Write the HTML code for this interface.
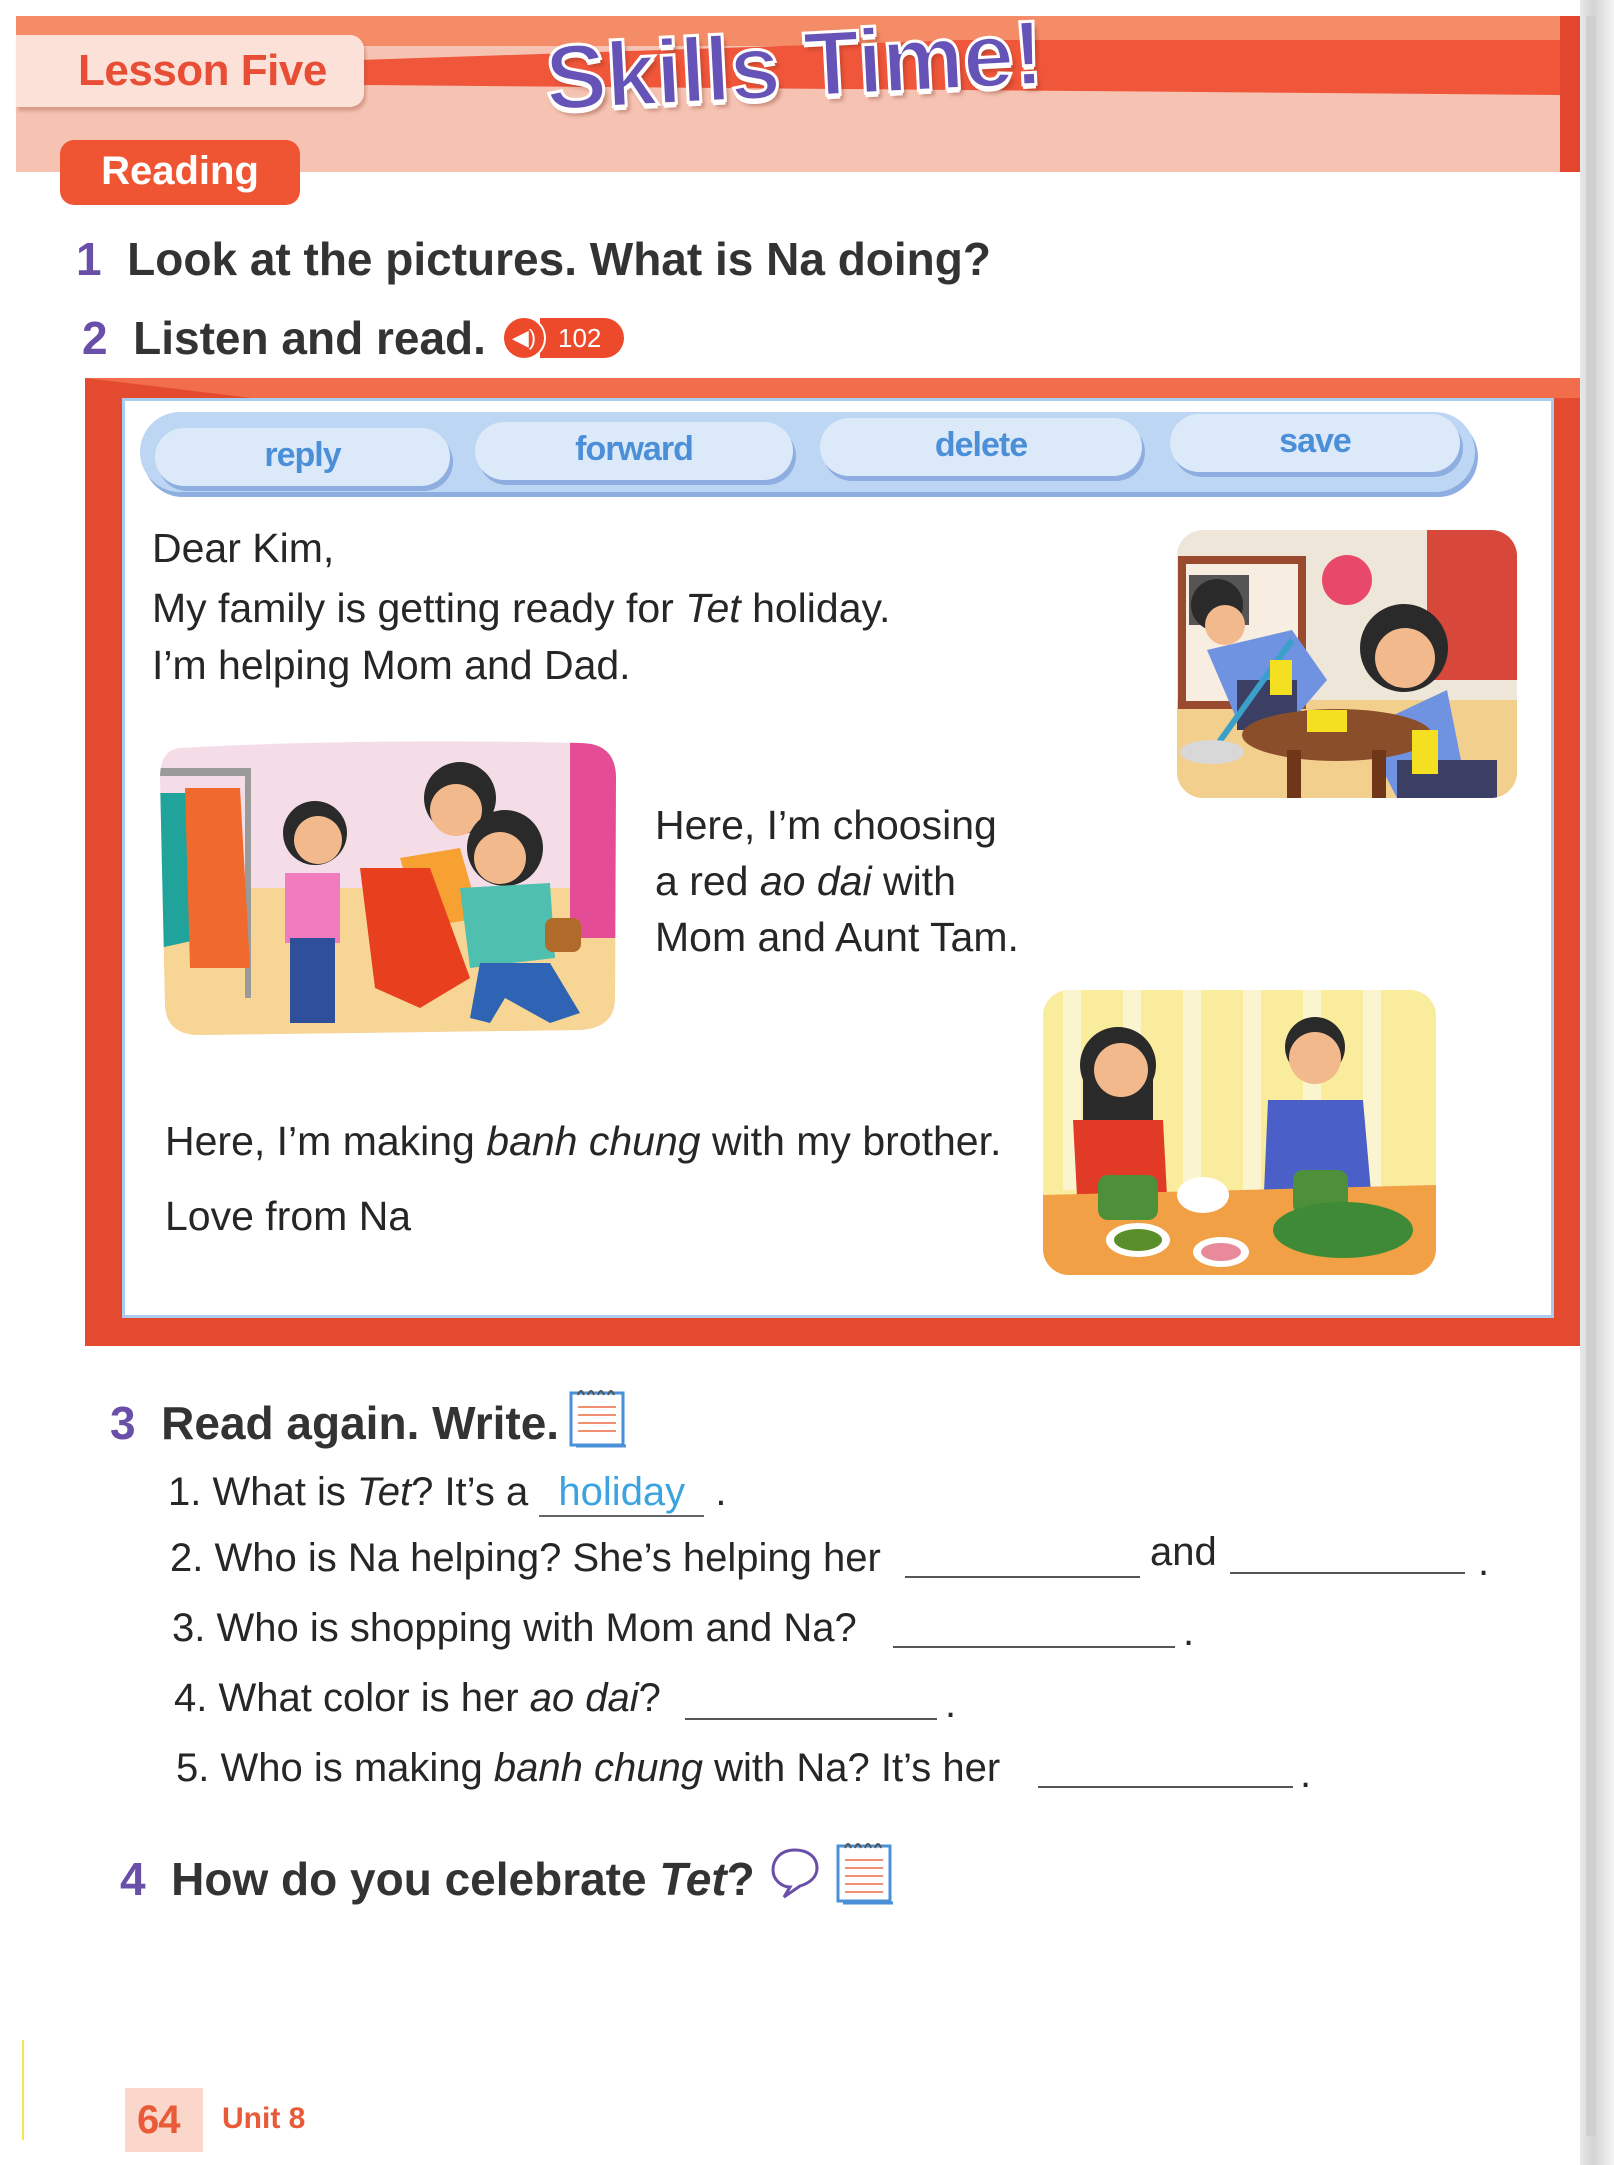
<!DOCTYPE html>
<html><head><meta charset="utf-8">
<style>
*{margin:0;padding:0;box-sizing:border-box}
body{width:1614px;height:2165px;background:#fff;position:relative;overflow:hidden;font-family:"Liberation Sans",sans-serif;color:#2b2b2b}
.a{position:absolute}
.t{position:absolute;font-size:41px;letter-spacing:0;white-space:nowrap;color:#262626}
.q{position:absolute;font-size:40px;letter-spacing:0;white-space:nowrap;color:#262626}
.h{position:absolute;font-size:46px;font-weight:bold;letter-spacing:0;white-space:nowrap;color:#333}
.n{color:#6a4fa8}
.btn{position:absolute;height:58px;border-radius:29px;background:#dce9f8;box-shadow:3px 5px 0 #8eaee2;color:#4b8fd8;font-weight:bold;font-size:34px;text-align:center;line-height:54px;letter-spacing:-1px}
.line{position:absolute;border-bottom:2px solid #555;height:2px}
</style></head><body>
<div class="a" style="left:16px;top:16px;width:1560px;height:156px;background:#f6c3b3"></div>
<div class="a" style="left:16px;top:16px;width:1560px;height:30px;background:#f58c68"></div>
<svg class="a" style="left:0;top:0" width="1614" height="180"><polygon points="360,60 1560,20 1560,95 360,85" fill="#f0563a"/><polygon points="16,16 1560,16 1560,40 400,40 16,24" fill="#f58c68"/><polygon points="1560,16 1580,16 1580,172 1560,172" fill="#e2462e"/></svg>
<div class="a" style="left:16px;top:35px;width:348px;height:72px;background:#fbe1d7;border-radius:0 14px 14px 0;box-shadow:2px 4px 3px rgba(160,80,60,.35);color:#e84e35;font-weight:bold;font-size:44px;line-height:72px;padding-left:62px;letter-spacing:-0.5px">Lesson Five</div>
<div class="a" style="left:545px;top:16px;font-size:92px;line-height:100px;font-weight:bold;color:#6553b8;letter-spacing:-1px;-webkit-text-stroke:3px #fff;text-shadow:0 4px 0 #fff,3px 6px 4px rgba(120,40,20,.4);transform:rotate(-3deg);transform-origin:center center">Skills Time!</div>
<div class="a" style="left:60px;top:140px;width:240px;height:65px;background:#ef5533;border-radius:14px;color:#fff;font-weight:bold;font-size:40px;line-height:63px;text-align:center">Reading</div>

<div class="h" style="left:76px;top:232px"><span class="n">1</span>&nbsp; Look at the pictures. What is Na doing?</div>
<div class="h" style="left:82px;top:311px"><span class="n">2</span>&nbsp; Listen and read.</div>
<div class="a" style="left:540px;top:318px;width:84px;height:40px;background:#ed4a2c;border-radius:0 20px 20px 0;color:#fff;font-size:26px;line-height:40px;padding-left:18px">102</div>
<div class="a" style="left:502px;top:316px;width:44px;height:44px;border-radius:50%;background:#ed4a2c;border:2px solid #fff;color:#fff;font-size:22px;line-height:40px;text-align:center">◀)</div>

<div class="a" style="left:85px;top:378px;width:1500px;height:968px;background:#e34a2f"></div>
<svg class="a" style="left:85px;top:378px" width="1500" height="40"><polygon points="0,0 250,30 1500,20 1500,0" fill="#f26d4c"/></svg>
<div class="a" style="left:122px;top:398px;width:1432px;height:920px;background:#fff;border:3px solid #a9cdee"></div>
<div class="a" style="left:140px;top:412px;width:1335px;height:80px;border-radius:40px;background:#bcd6f3;box-shadow:3px 5px 0 #8eaee2"></div>
<div class="btn" style="left:155px;top:428px;width:295px">reply</div>
<div class="btn" style="left:475px;top:422px;width:318px">forward</div>
<div class="btn" style="left:820px;top:418px;width:322px">delete</div>
<div class="btn" style="left:1170px;top:414px;width:290px">save</div>

<div class="t" style="left:152px;top:525px">Dear Kim,</div>
<div class="t" style="left:152px;top:585px">My family is getting ready for <i>Tet</i> holiday.</div>
<div class="t" style="left:152px;top:642px">I’m helping Mom and Dad.</div>

<svg class="a" style="left:1177px;top:530px" width="340" height="268"><defs><clipPath id="c1"><rect width="340" height="268" rx="26"/></clipPath></defs><g clip-path="url(#c1)"><rect width="340" height="268" fill="#efe6da"/><rect x="250" y="0" width="90" height="150" fill="#d7473a"/><rect y="170" width="340" height="98" fill="#f3cf8d"/><rect x="5" y="30" width="120" height="145" fill="#f7ede0" stroke="#9a4a2e" stroke-width="8"/><rect x="12" y="45" width="60" height="50" fill="#555"/><circle cx="40" cy="75" r="26" fill="#2a2a2a"/><circle cx="48" cy="95" r="20" fill="#f2b98c"/><path d="M30 120 L115 100 L150 150 L120 185 L60 190Z" fill="#6f93e0"/><rect x="60" y="150" width="60" height="50" fill="#3a3f63"/><line x1="115" y1="110" x2="40" y2="215" stroke="#3aa0c9" stroke-width="6"/><ellipse cx="35" cy="222" rx="32" ry="12" fill="#d8d8d8"/><circle cx="227" cy="118" r="44" fill="#2a2a2a"/><circle cx="228" cy="128" r="30" fill="#f2b98c"/><path d="M185 200 L270 160 L290 260 L220 268Z" fill="#6f93e0"/><rect x="220" y="230" width="100" height="40" fill="#3a3f63"/><ellipse cx="160" cy="205" rx="95" ry="26" fill="#8a4f2a"/><rect x="110" y="220" width="14" height="50" fill="#6f3718"/><rect x="195" y="220" width="14" height="50" fill="#6f3718"/><rect x="130" y="180" width="40" height="22" fill="#f4e020"/><rect x="235" y="200" width="26" height="44" fill="#f4e020"/><rect x="93" y="130" width="22" height="35" fill="#f4e020"/><circle cx="170" cy="50" r="25" fill="#e8496a"/></g></svg>

<svg class="a" style="left:160px;top:738px" width="456" height="297"><defs><clipPath id="c2"><path d="M20 10 Q200 0 420 5 Q456 5 456 40 L455 260 Q455 290 420 292 L40 297 Q5 297 5 265 L0 40 Q0 12 20 10Z"/></clipPath></defs><g clip-path="url(#c2)"><rect width="456" height="297" fill="#f5dde8"/><rect y="150" width="456" height="147" fill="#f7d594"/><rect x="410" y="0" width="46" height="200" fill="#e54c96"/><rect x="0" y="30" width="90" height="8" fill="#9a9a9a"/><rect x="85" y="30" width="6" height="230" fill="#9a9a9a"/><path d="M0 55 L30 55 L45 200 L0 210Z" fill="#1fa39a"/><path d="M25 50 L80 50 L90 230 L30 230Z" fill="#f06a2e"/><circle cx="155" cy="95" r="32" fill="#2a2a2a"/><circle cx="158" cy="102" r="24" fill="#f2b98c"/><rect x="125" y="135" width="55" height="70" fill="#f27bbf"/><rect x="130" y="200" width="45" height="85" fill="#2f4f9a"/><circle cx="300" cy="60" r="36" fill="#2a2a2a"/><circle cx="296" cy="72" r="26" fill="#f2b98c"/><path d="M240 120 L300 110 L320 180 L260 190Z" fill="#f6a132"/><path d="M200 130 L270 130 L310 240 L260 270 L215 250Z" fill="#e8401f"/><circle cx="345" cy="110" r="38" fill="#2a2a2a"/><circle cx="340" cy="120" r="26" fill="#f2b98c"/><path d="M300 150 L390 145 L395 220 L310 230Z" fill="#4fc0b0"/><path d="M320 225 L390 225 L420 275 L390 285 L345 260 L330 285 L310 280Z" fill="#2f63b3"/><rect x="385" y="180" width="36" height="34" rx="8" fill="#b06a2a"/></g></svg>

<div class="t" style="left:655px;top:802px">Here, I’m choosing</div>
<div class="t" style="left:655px;top:858px">a red <i>ao dai</i> with</div>
<div class="t" style="left:655px;top:914px">Mom and Aunt Tam.</div>

<svg class="a" style="left:1043px;top:990px" width="393" height="285"><defs><clipPath id="c3"><rect width="393" height="285" rx="26"/></clipPath></defs><g clip-path="url(#c3)"><rect width="393" height="285" fill="#f9ec9c"/><g fill="#fbf5cf"><rect x="20" width="18" height="200"/><rect x="80" width="18" height="200"/><rect x="140" width="18" height="200"/><rect x="200" width="18" height="200"/><rect x="260" width="18" height="200"/><rect x="320" width="18" height="200"/></g><circle cx="75" cy="75" r="38" fill="#2a2a2a"/><path d="M40 70 L40 140 L110 140 L110 70Z" fill="#2a2a2a"/><circle cx="78" cy="80" r="27" fill="#f2b98c"/><path d="M30 130 L120 130 L125 225 L35 225Z" fill="#e13a26"/><circle cx="272" cy="57" r="30" fill="#2a2a2a"/><circle cx="272" cy="68" r="26" fill="#f2b98c"/><path d="M225 110 L320 110 L330 225 L220 225Z" fill="#4b5fc9"/><path d="M0 205 L393 195 L393 285 L0 285Z" fill="#f1a045"/><rect x="55" y="185" width="60" height="45" rx="10" fill="#4e8f3a"/><rect x="250" y="180" width="55" height="45" rx="10" fill="#4e8f3a"/><ellipse cx="300" cy="240" rx="70" ry="28" fill="#3f8a36"/><ellipse cx="160" cy="205" rx="26" ry="18" fill="#fff"/><ellipse cx="95" cy="250" rx="32" ry="17" fill="#fff"/><ellipse cx="95" cy="250" rx="24" ry="11" fill="#5a8e2a"/><ellipse cx="178" cy="262" rx="28" ry="15" fill="#fff"/><ellipse cx="178" cy="262" rx="20" ry="9" fill="#e98a9a"/></g></svg>

<div class="t" style="left:165px;top:1118px">Here, I’m making <i>banh chung</i> with my brother.</div>
<div class="t" style="left:165px;top:1193px">Love from Na</div>

<div class="h" style="left:110px;top:1396px"><span class="n">3</span>&nbsp; Read again. Write.</div>
<svg class="a" style="left:568px;top:1385px" width="62" height="64"><rect x="3" y="8" width="52" height="52" fill="#fff" stroke="#4a90d8" stroke-width="3"/><g stroke="#f09070" stroke-width="2"><line x1="10" y1="22" x2="48" y2="22"/><line x1="10" y1="30" x2="48" y2="30"/><line x1="10" y1="38" x2="48" y2="38"/><line x1="10" y1="46" x2="48" y2="46"/></g><path d="M10 10 q3 -8 6 0 M20 10 q3 -8 6 0 M30 10 q3 -8 6 0 M40 10 q3 -8 6 0" stroke="#555" fill="none" stroke-width="2"/><line x1="8" y1="61" x2="58" y2="61" stroke="#4a90d8" stroke-width="3"/></svg>

<div class="q" style="left:168px;top:1470px">1. What is <i>Tet</i>? It’s a <span style="display:inline-block;width:165px;border-bottom:2px solid #666;color:#3aa3e0;text-align:center">holiday</span> .</div>
<div class="q" style="left:170px;top:1536px">2. Who is Na helping? She’s helping her</div>
<div class="line" style="left:905px;top:1576px;width:235px"></div>
<div class="q" style="left:1150px;top:1530px">and</div>
<div class="line" style="left:1230px;top:1572px;width:235px"></div>
<div class="q" style="left:1478px;top:1540px">.</div>
<div class="q" style="left:172px;top:1606px">3. Who is shopping with Mom and Na?</div>
<div class="line" style="left:893px;top:1646px;width:282px"></div>
<div class="q" style="left:1183px;top:1610px">.</div>
<div class="q" style="left:174px;top:1676px">4. What color is her <i>ao dai</i>?</div>
<div class="line" style="left:685px;top:1718px;width:252px"></div>
<div class="q" style="left:945px;top:1682px">.</div>
<div class="q" style="left:176px;top:1746px">5. Who is making <i>banh chung</i> with Na? It’s her</div>
<div class="line" style="left:1038px;top:1786px;width:255px"></div>
<div class="q" style="left:1300px;top:1752px">.</div>

<div class="h" style="left:120px;top:1852px"><span class="n">4</span>&nbsp; How do you celebrate <i>Tet</i>?</div>
<svg class="a" style="left:770px;top:1845px" width="50" height="56"><path d="M25 5 C10 5 3 15 3 25 C3 35 12 42 20 42 L14 52 L30 41 C40 38 47 32 47 23 C47 12 38 5 25 5Z" fill="#fff" stroke="#6a4fa8" stroke-width="3"/></svg>
<svg class="a" style="left:835px;top:1838px" width="62" height="68"><rect x="3" y="8" width="52" height="55" fill="#fff" stroke="#4a90d8" stroke-width="3"/><g stroke="#f09070" stroke-width="2"><line x1="10" y1="22" x2="48" y2="22"/><line x1="10" y1="30" x2="48" y2="30"/><line x1="10" y1="38" x2="48" y2="38"/><line x1="10" y1="46" x2="48" y2="46"/><line x1="10" y1="54" x2="48" y2="54"/></g><path d="M10 10 q3 -8 6 0 M20 10 q3 -8 6 0 M30 10 q3 -8 6 0 M40 10 q3 -8 6 0" stroke="#555" fill="none" stroke-width="2"/><line x1="8" y1="65" x2="58" y2="65" stroke="#4a90d8" stroke-width="3"/></svg>

<div class="a" style="left:125px;top:2088px;width:78px;height:64px;background:#fad7ca;color:#e85a38;font-weight:bold;font-size:40px;line-height:64px;padding-left:12px;letter-spacing:-1px">64</div>
<div class="a" style="left:222px;top:2102px;color:#e85a38;font-weight:bold;font-size:30px">Unit 8</div>
<div class="a" style="left:22px;top:2040px;width:2px;height:100px;background:#f6e35a"></div>

<div class="a" style="left:1580px;top:0;width:34px;height:2165px;background:linear-gradient(90deg,#e8e8e8,#d4d4d4 40%,#f5f5f5)"></div>
<div class="a" style="left:1586px;top:16px;width:10px;height:2120px;background:#cfcfcf"></div>
</body></html>
